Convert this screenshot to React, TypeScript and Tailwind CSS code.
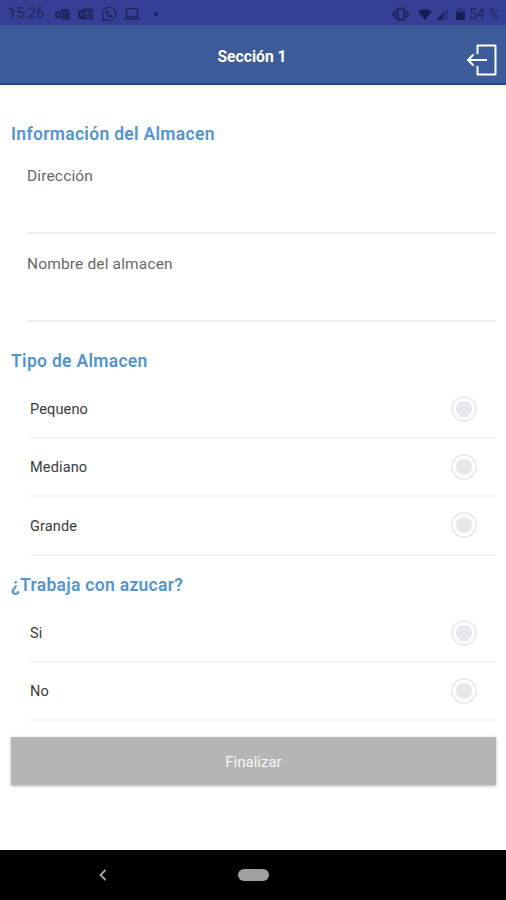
import React, { useState } from 'react';

const warehouseFields = ['Dirección', 'Nombre del almacen'];
const warehouseTypes = ['Pequeno', 'Mediano', 'Grande'];
const sugarOptions = ['Si', 'No'];

const MailIcon: React.FC = () => (
  <svg className="h-[14px] w-4" viewBox="0 0 16 14" fill="none">
    <path d="M0 4.5h6.5V11H0z" fill="#1c2560" />
    <path d="M6 2h7l1.5 2v3L10 9.5 6.5 6z" fill="#1c2560" />
    <path d="M7 12.500h8V6.500L10.500 10 7 8z" fill="#1c2560" />
    <path d="m8 4 2.500 2.500L13.500 4" stroke="#35409a" strokeWidth=".7" />
    <circle cx="3.300" cy="7.700" r="1.300" stroke="#35409a" strokeWidth=".8" />
  </svg>
);

const OutlookIcon: React.FC = () => (
  <svg className="h-[14px] w-4" viewBox="0 0 16 14" fill="none">
    <path d="M0 3.500 7.500 2v11L0 11.500z" fill="#1c2560" />
    <path d="M7 2.500h7.500v9H7" stroke="#1c2560" strokeWidth="1.300" />
    <path d="M8.500 4.500H13L9.500 8.500h2.500v3" stroke="#1c2560" strokeWidth="1.600" />
    <circle cx="3.800" cy="7.500" r="1.500" stroke="#35409a" strokeWidth=".9" />
  </svg>
);

const StatusBar: React.FC = () => (
  <div className="flex h-[25px] items-center bg-[#353f95] pt-[3px] pr-[6px] pl-2 text-[#1c2560]">
    <span className="w-[47px] text-[14.5px] leading-none tracking-[0.1px]">15:26</span>
    <MailIcon />
    <span className="w-[7px]" />
    <OutlookIcon />
    <svg className="ml-[7px] h-4 w-4" viewBox="0 0 16 16" fill="none" stroke="#1c2560">
      <path d="m1.3 14.7 1-3.7A6.7 6.7 0 1 1 5 13.8z" strokeWidth="1.2" />
      <path d="M5.6 4.7c-1.8 1.5.8 6.3 4.1 6.5 1 0 1.7-.8 1.5-1.5L9.5 9l-.8.9C7.5 9.4 6.6 8.4 6.3 7.5L7 6.6l-.7-1.9z" fill="#1c2560" strokeWidth=".4" />
    </svg>
    <svg className="ml-[7px] h-[14px] w-4" viewBox="0 0 16 14" fill="none" stroke="#1c2560">
      <path d="M2.5 1.7h11v8.5h-11z" strokeWidth="1.2" />
      <path d="M0 12.2h16" strokeWidth="1.4" />
    </svg>
    <span className="ml-[14px] size-[4px] rounded-full bg-[#1c2560]" />

    <svg className="ml-auto h-[14px] w-[18px]" viewBox="0 0 18 14" fill="none" stroke="#1c2560">
      <path d="M5.7 1.5h6.6v11H5.7z" strokeWidth="1.9" />
      <path d="M3.2 3.5v7M14.8 3.5v7M1 5.5v3M17 5.5v3" strokeWidth="1.6" />
    </svg>
    <svg className="ml-2 h-[11px] w-[14px]" viewBox="0 0 15 11" preserveAspectRatio="none" fill="#151d55">
      <path d="M0 2.5C4.5-.5 10.5-.5 15 2.5L7.5 11z" />
    </svg>
    <svg className="ml-[4px] h-3 w-3" viewBox="0 0 12 12">
      <path d="M12 0v12H0z" fill="#2b3580" />
      <path d="M7.5 4.5V12H0z" fill="#1c2560" />
    </svg>
    <svg className="ml-2 h-3 w-[9px]" viewBox="0 0 9 12">
      <path d="M2.5 0h4v1.5H9V5H0V1.5h2.500z" fill="#29337d" />
      <path d="M0 4.5h9V12H0z" fill="#151d55" />
    </svg>
    <span className="ml-[4px] w-[31px] text-[14px] leading-none tracking-[0.2px] whitespace-nowrap">54 %</span>
  </div>
);

const Header: React.FC = () => (
  <header className="relative flex h-[60px] items-center justify-center border-b-2 border-[#204889] bg-[#3d5a99]">
    <h1 className="pt-[6px] pr-[2px] text-[15.7px] leading-5 font-bold text-white">Sección 1</h1>
    <button aria-label="Salir" className="absolute top-[18px] right-[8px]">
      <svg className="h-[34px] w-8" viewBox="0 0 32 34" fill="none" stroke="white" strokeWidth="2">
        <path d="M11.5 11V2.5h18v29h-18V23" strokeLinejoin="round" />
        <path d="M21 17H2M7.500 11.500 2 17l5.500 5.500" />
      </svg>
    </button>
  </header>
);

const SectionTitle: React.FC<{ children: React.ReactNode }> = ({ children }) => (
  <h2 className="h-6 text-[17.5px] leading-6 font-semibold tracking-[0.3px] text-[#5494d0]">{children}</h2>
);

interface OptionListProps {
  name: string;
  options: string[];
}

const OptionList: React.FC<OptionListProps> = ({ name, options }) => {
  const [selected, setSelected] = useState('');

  return (
    <div className="mt-2 ml-[19px]">
      {options.map((option) => (
        <label key={option} className="flex h-[58.4px] items-center justify-between border-b-2 border-[#f3f4f5] pr-[19px] text-[14.5px] tracking-[0.15px] text-[#3a3a3a]">
          <span className="pt-[2px]">{option}</span>
          <input
            type="radio"
            name={name}
            className="sr-only"
            checked={selected === option}
            onChange={() => setSelected(option)}
          />
          <span className="flex size-[26px] items-center justify-center rounded-full border-2 border-[#eaebed]">
            <span className={selected === option ? 'size-4 rounded-full bg-[#5494d0]' : 'size-4 rounded-full bg-[#e6e7ea]'} />
          </span>
        </label>
      ))}
    </div>
  );
};

export default function App() {
  return (
    <div className="flex h-[900px] w-full flex-col bg-white font-['Roboto',sans-serif]">
      <StatusBar />
      <Header />

      <main className="flex-1 pt-[37px] pr-[10px] pl-[11px]">
        <SectionTitle>Información del Almacen</SectionTitle>
        <div className="mb-[26.5px] ml-4">
          {warehouseFields.map((field) => (
            <label key={field} className="block h-[88px] border-b-2 border-[#eeeff0] pt-5 text-[15.5px] leading-5 tracking-[0.15px] text-[#686868]">
              {field}
              <input className="block w-full outline-none" />
            </label>
          ))}
        </div>

        <SectionTitle>Tipo de Almacen</SectionTitle>
        <OptionList name="tipo" options={warehouseTypes} />

        <div className="mt-[17px]">
          <SectionTitle>¿Trabaja con azucar?</SectionTitle>
          <OptionList name="azucar" options={sugarOptions} />
        </div>

        <button className="mt-4 h-12 w-full bg-[#b5b5b5] pt-px text-[15px] text-[#f5f5f5] shadow-[0_1px_3px_rgba(0,0,0,0.3)]">
          Finalizar
        </button>
      </main>

      <nav className="flex h-[50px] items-center bg-black">
        <svg className="ml-[99px] h-3 w-2" viewBox="0 0 8 12" fill="none" stroke="#a8a8a8" strokeWidth="1.8">
          <path d="M6.5 1 1.5 6l5 5" />
        </svg>
        <span className="ml-[131px] h-3 w-[31px] rounded-full bg-[#a0a0a0]" />
      </nav>
    </div>
  );
}
